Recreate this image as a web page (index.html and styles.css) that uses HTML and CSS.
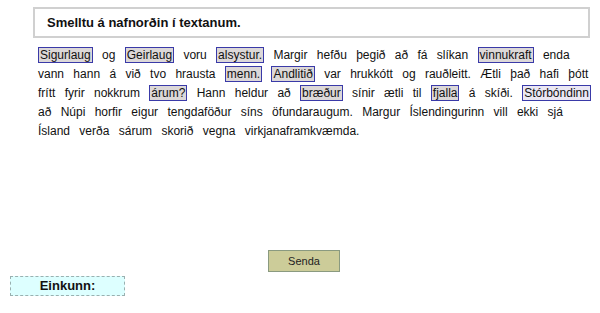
FILE: index.html
```
<!DOCTYPE html>
<html>
    <head>
        <title>Nafnorð</title>
        <meta charset="utf-8"/>
        <link rel="stylesheet" href="styles.css">
    </head>
    <body>
        <main>
            <div class="task">Smelltu á nafnorðin í textanum.</div>

            <p class="text">
                <span class="word">Sigurlaug</span> og <span class="word">Geirlaug</span> voru <span class="word">alsystur.</span>
                Margir hefðu þegið að fá slíkan <span class="word">vinnukraft</span> enda vann hann á við tvo hrausta
                <span class="word">menn.</span> <span class="word">Andlitið</span> var hrukkótt og rauðleitt. Ætli það hafi þótt
                frítt fyrir nokkrum <span class="word">árum?</span> Hann heldur að <span class="word">bræður</span> sínir ætli til
                <span class="word">fjalla</span> á skíði. <span class="word light">Stórbóndinn</span> að Núpi horfir eigur
                tengdaföður síns öfundaraugum. Margur Íslendingurinn vill ekki sjá Ísland verða sárum skorið vegna
                virkjanaframkvæmda.
            </p>

            <div class="actions">
                <button type="button">Senda</button>
            </div>

            <div class="grade">Einkunn:</div>
        </main>
    </body>
</html>
```

FILE: styles.css
```
* {
    box-sizing: border-box;
}
body, html {
    margin: 0;
    padding: 0;
    background: #fff;
    color: #111;
    font-family: 'Liberation Sans', Arial, sans-serif;
}
main {
    display: flex;
    flex-direction: column;
}

.task {
    margin: 7px 10px 0 33px;
    height: 31px;
    padding: 0 12px;
    border: 2px solid #d0d0d0;
    font-size: 13px;
    font-weight: bold;
    line-height: 27px;
}

.text {
    margin: 8px 0 0 38px;
    font-size: 12px;
    line-height: 19px;
    word-spacing: 6px;
}
.word {
    border: 1px solid #3a3aa8;
    background: #dcd8d8;
    padding: 0 1px;
}
.word.light {
    background: #ebe8f4;
}

.actions {
    display: flex;
    justify-content: center;
    margin-top: 109px;
    padding-left: 8px;
}
button {
    width: 72px;
    height: 22px;
    background: #cccc99;
    border: 1px solid #8a9a80;
    color: #222;
    font-family: 'Liberation Sans', Arial, sans-serif;
    font-size: 11px;
}

.grade {
    margin: 4px 0 0 10px;
    width: 115px;
    height: 20px;
    background: #ddffff;
    border: 1px dashed #9ab0b0;
    text-align: center;
    font-size: 13px;
    font-weight: bold;
    line-height: 18px;
}
```
